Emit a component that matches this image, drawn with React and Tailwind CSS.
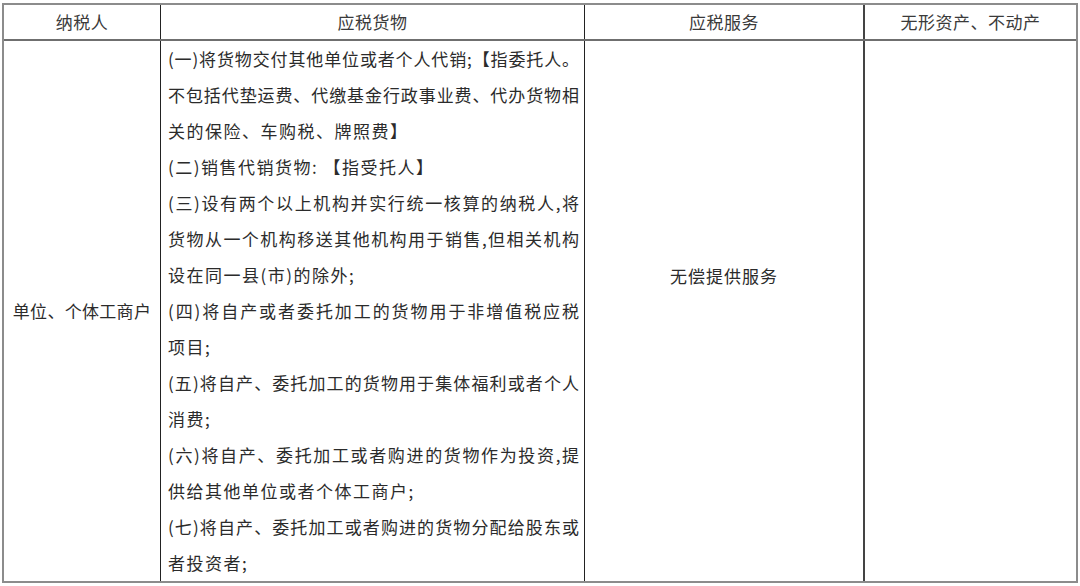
import React from 'react';

const font = { fontFamily: '"Noto Sans CJK SC", "Noto Sans", sans-serif' };

// [text, justify]
const lines = [
  ['(一)将货物交付其他单位或者个人代销;【指委托人。', true],
  ['不包括代垫运费、代缴基金行政事业费、代办货物相', true],
  ['关的保险、车购税、牌照费】', false],
  ['(二)销售代销货物: 【指受托人】', false],
  ['(三)设有两个以上机构并实行统一核算的纳税人,将', true],
  ['货物从一个机构移送其他机构用于销售,但相关机构', true],
  ['设在同一县(市)的除外;', false],
  ['(四)将自产或者委托加工的货物用于非增值税应税', true],
  ['项目;', false],
  ['(五)将自产、委托加工的货物用于集体福利或者个人', true],
  ['消费;', false],
  ['(六)将自产、委托加工或者购进的货物作为投资,提', true],
  ['供给其他单位或者个体工商户;', false],
  ['(七)将自产、委托加工或者购进的货物分配给股东或', true],
  ['者投资者;', false],
];

export default function App() {
  return (
    <div className="w-[1080px] h-[586px] bg-white pt-[3px] pl-[2px] text-[#2b2b2b]" style={font}>
      <div className="w-[1076px] border-2 border-[#8c8c8c]">
        {/* header */}
        <div className="flex h-[36px] border-b-2 border-[#6f6f6f] text-[17px] text-[#3a3a3a]">
          <div className="w-[157px] border-r border-[#222] flex items-center justify-center tracking-[0.5px]">纳税人</div>
          <div className="w-[424px] border-r border-[#222] flex items-center justify-center tracking-[0.5px]">应税货物</div>
          <div className="w-[280px] border-r-2 border-[#444] flex items-center justify-center tracking-[0.5px]">应税服务</div>
          <div className="flex-1 flex items-center justify-center tracking-[0.5px]">无形资产、不动产</div>
        </div>
        {/* body */}
        <div className="flex h-[540px] text-[17px]">
          <div className="w-[157px] border-r border-[#222] flex items-center justify-center tracking-[0.3px]">
            单位、个体工商户
          </div>
          <div className="w-[424px] border-r border-[#222] pl-[7px] pr-[5px]">
            {lines.map(([t, j], i) => (
              <div
                key={i}
                className={
                  'h-[36px] leading-[36px] whitespace-nowrap ' +
                  (j ? 'text-justify [text-align-last:justify]' : 'tracking-[1.5px]')
                }
              >
                {t}
              </div>
            ))}
          </div>
          <div className="w-[280px] border-r-2 border-[#444] flex items-center justify-center pb-[70px] tracking-[1px]">
            无偿提供服务
          </div>
          <div className="flex-1"></div>
        </div>
      </div>
    </div>
  );
}
